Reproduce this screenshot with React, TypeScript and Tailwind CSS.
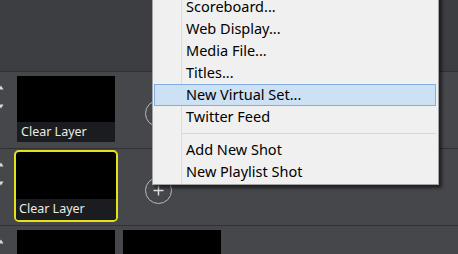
import React from "react";

const MENU_TOP = ["Scoreboard...", "Web Display...", "Media File...", "Titles...", "New Virtual Set...", "Twitter Feed"];
const MENU_BOTTOM = ["Add New Shot", "New Playlist Shot"];

function Arrows() {
  return (
    <div className="-ml-[2px] flex w-[14px] shrink-0 flex-col items-start gap-[14px] pt-[13px]">
      <svg width="6" height="5" viewBox="0 0 6 5">
        <path d="M3 0.5 L5.5 4.5 L0.5 4.5 Z" fill="#d8d8d8" />
      </svg>
      <svg width="6" height="5" viewBox="0 0 6 5">
        <path d="M0.5 0.5 L5.5 0.5 L3 4.5 Z" fill="#d8d8d8" />
      </svg>
    </div>
  );
}

function Thumb({ label, selected }: { label?: string; selected?: boolean }) {
  if (selected) {
    return (
      <div className="-m-[3px] flex h-[72px] w-[104px] shrink-0 flex-col overflow-hidden rounded-[5px] border-2 border-[#e6e01c] bg-black">
        <div className="flex-1" />
        <div className="flex h-[21px] items-center bg-[#1b1c1f] pl-[3px] text-[12.5px] text-[#ecebe0]">
          {label}
        </div>
      </div>
    );
  }
  return (
    <div className="flex h-[66px] w-[98px] shrink-0 flex-col bg-black">
      <div className="flex-1" />
      {label && (
        <div className="flex h-[20px] items-center bg-[#1b1c1f] pl-[4px] text-[12.5px] text-[#ecebe0]">
          {label}
        </div>
      )}
    </div>
  );
}

function Plus() {
  return (
    <div className="ml-[22px] mt-[3px] flex h-[27px] w-[27px] shrink-0 items-center justify-center self-center rounded-full border border-[#b9babd]">
      <svg width="13" height="13" viewBox="0 0 13 13">
        <path d="M6.5 1.5 V11.5 M1.5 6.5 H11.5" stroke="#e0e0e0" strokeWidth="1.4" />
      </svg>
    </div>
  );
}

function Row({ children }: { children: React.ReactNode }) {
  return (
    <div className="flex h-[77px] border-b border-[#303135] bg-[#46474b]">
      <Arrows />
      <div className="flex items-start gap-[8px] pl-[5px] pt-[4px]">{children}</div>
    </div>
  );
}

export default function App() {
  return (
    <div
      className="relative h-[254px] w-[458px] overflow-hidden bg-[#46474b]"
      style={{ fontFamily: "'Noto Sans', 'Open Sans', sans-serif" }}
    >
      <div className="h-[72px] border-b border-[#303135] bg-[#3d3e42]" />
      <Row>
        <Thumb label="Clear Layer" />
        <Plus />
      </Row>
      <Row>
        <Thumb label="Clear Layer" selected />
        <Plus />
      </Row>
      <Row>
        <Thumb />
        <Thumb />
        <Plus />
      </Row>

      <div className="absolute left-[152px] top-[-7px] w-[287px] border border-[#a3a3a3] bg-[#f0f0f0] py-[1px] shadow-[3px_3px_3px_rgba(0,0,0,0.55)]">
        <div className="absolute bottom-0 left-[28px] top-0 w-px bg-[#dcdcdc]" />
        <div className="relative flex flex-col pl-[1px] pr-[2px] pt-[1px]">
          {MENU_TOP.map((item) => (
            <div
              key={item}
              className={`flex h-[22px] items-center text-[14.5px] text-black ${
                item === "New Virtual Set..."
                  ? "border border-[#82ade0] bg-[#cde1f4] pl-[31px]"
                  : "pl-[32px]"
              }`}
            >
              {item}
            </div>
          ))}
          <div className="flex h-[11px] items-center pl-[28px]">
            <div className="h-px w-full bg-[#d7d7d7]" />
          </div>
          {MENU_BOTTOM.map((item) => (
            <div key={item} className="flex h-[22px] items-center pl-[32px] text-[14.5px] text-black">
              {item}
            </div>
          ))}
        </div>
      </div>
    </div>
  );
}
